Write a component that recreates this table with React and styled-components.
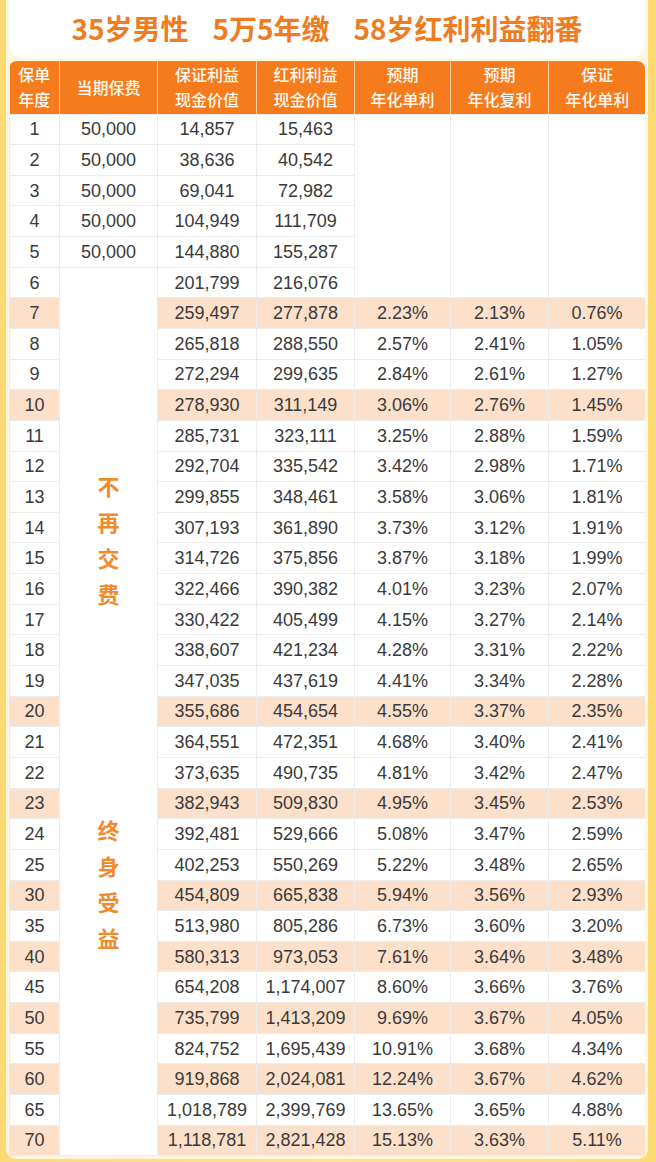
import React from "react";
import styled, { createGlobalStyle } from "styled-components";

const GlobalStyle = createGlobalStyle`
  html, body { margin: 0; padding: 0; background: #fde07e; }
  body { font-family: "Liberation Sans", Arial, sans-serif; }
  * { box-sizing: border-box; }
`;

const Page = styled.div`
  width: 656px;
  height: 1162px;
  overflow: hidden;
  padding: 0 8px 0 6px;
  background: linear-gradient(90deg, #fddb72 0%, #fde38a 50%, #fddc76 100%);
`;

const Panel = styled.div`
  background: #fff6e2;
  border-radius: 0 0 10px 10px;
  padding: 0 3px 3px 3px;
`;

const TitleCard = styled.div`
  height: 58px;
  background: #ffffff;
  border-radius: 0 0 14px 14px;
  display: flex;
  align-items: center;
  justify-content: center;
  gap: 24px;
  padding-bottom: 2px;
`;

const TitlePart = styled.span`
  font-family: "Noto Sans CJK SC", "Liberation Sans", sans-serif;
  font-weight: 700;
  font-size: 28px;
  line-height: 1;
  color: #ef7c20;
`;

const TableWrap = styled.div`
  margin-top: 3px;
  border-radius: 8px 8px 0 0;
  overflow: hidden;
`;

const Table = styled.table`
  width: 636px;
  border-collapse: collapse;
  table-layout: fixed;
`;

const HeadCell = styled.th`
  height: 53px;
  padding: 0;
  background: #f57b1d;
  color: #fff8ee;
  font-family: "Noto Sans CJK SC", sans-serif;
  font-weight: 500;
  font-size: 16px;
  line-height: 25px;
  text-align: center;
  vertical-align: middle;
  border-left: 1px solid rgba(255, 236, 210, 0.75);
  &:first-child { border-left: none; }
`;

const Row = styled.tr`
  height: 30.65px;
`;

const Cell = styled.td`
  padding: 0;
  text-align: center;
  vertical-align: middle;
  font-family: "Liberation Sans", Arial, sans-serif;
  font-size: 18px;
  line-height: 20px;
  color: #3a3a3a;
  white-space: nowrap;
  border: 1px solid #ececec;
  background: ${(p) => (p.$hl ? "#fde0ca" : "#ffffff")};
`;

const NoteCell = styled.td`
  padding: 0;
  background: #ffffff;
  border: 1px solid #ececec;
  vertical-align: middle;
`;

const NoteStack = styled.div`
  display: flex;
  flex-direction: column;
  align-items: center;
  gap: 200px;
`;

const NoteWord = styled.div`
  width: 22px;
  font-family: "Noto Sans CJK SC", sans-serif;
  font-weight: 700;
  font-size: 22px;
  line-height: 36px;
  color: #f08a2c;
  text-align: center;
  word-break: break-all;
`;

const widths = [50, 98, 99, 98, 96, 98, 97];

const headers = [
  ["保单", "年度"],
  ["当期保费"],
  ["保证利益", "现金价值"],
  ["红利利益", "现金价值"],
  ["预期", "年化单利"],
  ["预期", "年化复利"],
  ["保证", "年化单利"],
];

const paid = [
  [1, "50,000", "14,857", "15,463"],
  [2, "50,000", "38,636", "40,542"],
  [3, "50,000", "69,041", "72,982"],
  [4, "50,000", "104,949", "111,709"],
  [5, "50,000", "144,880", "155,287"],
];

const later = [
  [6, "201,799", "216,076"],
  [7, "259,497", "277,878", "2.23%", "2.13%", "0.76%"],
  [8, "265,818", "288,550", "2.57%", "2.41%", "1.05%"],
  [9, "272,294", "299,635", "2.84%", "2.61%", "1.27%"],
  [10, "278,930", "311,149", "3.06%", "2.76%", "1.45%"],
  [11, "285,731", "323,111", "3.25%", "2.88%", "1.59%"],
  [12, "292,704", "335,542", "3.42%", "2.98%", "1.71%"],
  [13, "299,855", "348,461", "3.58%", "3.06%", "1.81%"],
  [14, "307,193", "361,890", "3.73%", "3.12%", "1.91%"],
  [15, "314,726", "375,856", "3.87%", "3.18%", "1.99%"],
  [16, "322,466", "390,382", "4.01%", "3.23%", "2.07%"],
  [17, "330,422", "405,499", "4.15%", "3.27%", "2.14%"],
  [18, "338,607", "421,234", "4.28%", "3.31%", "2.22%"],
  [19, "347,035", "437,619", "4.41%", "3.34%", "2.28%"],
  [20, "355,686", "454,654", "4.55%", "3.37%", "2.35%"],
  [21, "364,551", "472,351", "4.68%", "3.40%", "2.41%"],
  [22, "373,635", "490,735", "4.81%", "3.42%", "2.47%"],
  [23, "382,943", "509,830", "4.95%", "3.45%", "2.53%"],
  [24, "392,481", "529,666", "5.08%", "3.47%", "2.59%"],
  [25, "402,253", "550,269", "5.22%", "3.48%", "2.65%"],
  [30, "454,809", "665,838", "5.94%", "3.56%", "2.93%"],
  [35, "513,980", "805,286", "6.73%", "3.60%", "3.20%"],
  [40, "580,313", "973,053", "7.61%", "3.64%", "3.48%"],
  [45, "654,208", "1,174,007", "8.60%", "3.66%", "3.76%"],
  [50, "735,799", "1,413,209", "9.69%", "3.67%", "4.05%"],
  [55, "824,752", "1,695,439", "10.91%", "3.68%", "4.34%"],
  [60, "919,868", "2,024,081", "12.24%", "3.67%", "4.62%"],
  [65, "1,018,789", "2,399,769", "13.65%", "3.65%", "4.88%"],
  [70, "1,118,781", "2,821,428", "15.13%", "3.63%", "5.11%"],
];

const highlighted = new Set([7, 10, 20, 23, 30, 40, 50, 60, 70]);

export default function App() {
  return (
    <>
      <GlobalStyle />
      <Page>
        <Panel>
          <TitleCard>
            <TitlePart>35岁男性</TitlePart>
            <TitlePart>5万5年缴</TitlePart>
            <TitlePart>58岁红利利益翻番</TitlePart>
          </TitleCard>
          <TableWrap>
            <Table>
              <colgroup>
                {widths.map((w, i) => (
                  <col key={i} style={{ width: w }} />
                ))}
              </colgroup>
              <thead>
                <tr>
                  {headers.map((lines, i) => (
                    <HeadCell key={i}>
                      {lines.map((l, j) => (
                        <div key={j}>{l}</div>
                      ))}
                    </HeadCell>
                  ))}
                </tr>
              </thead>
              <tbody>
                {paid.map((r, i) => (
                  <Row key={r[0]}>
                    <Cell>{r[0]}</Cell>
                    <Cell>{r[1]}</Cell>
                    <Cell>{r[2]}</Cell>
                    <Cell>{r[3]}</Cell>
                    {i === 0 && (
                      <>
                        <Cell rowSpan={6} />
                        <Cell rowSpan={6} />
                        <Cell rowSpan={6} />
                      </>
                    )}
                  </Row>
                ))}
                {later.map((r, i) => {
                  const hl = highlighted.has(r[0]);
                  return (
                    <Row key={r[0]}>
                      <Cell $hl={hl}>{r[0]}</Cell>
                      {i === 0 && (
                        <NoteCell rowSpan={later.length}>
                          <NoteStack>
                            <NoteWord>不再交费</NoteWord>
                            <NoteWord>终身受益</NoteWord>
                          </NoteStack>
                        </NoteCell>
                      )}
                      {r.slice(1).map((v, j) => (
                        <Cell key={j} $hl={hl}>
                          {v}
                        </Cell>
                      ))}
                    </Row>
                  );
                })}
              </tbody>
            </Table>
          </TableWrap>
        </Panel>
      </Page>
    </>
  );
}
